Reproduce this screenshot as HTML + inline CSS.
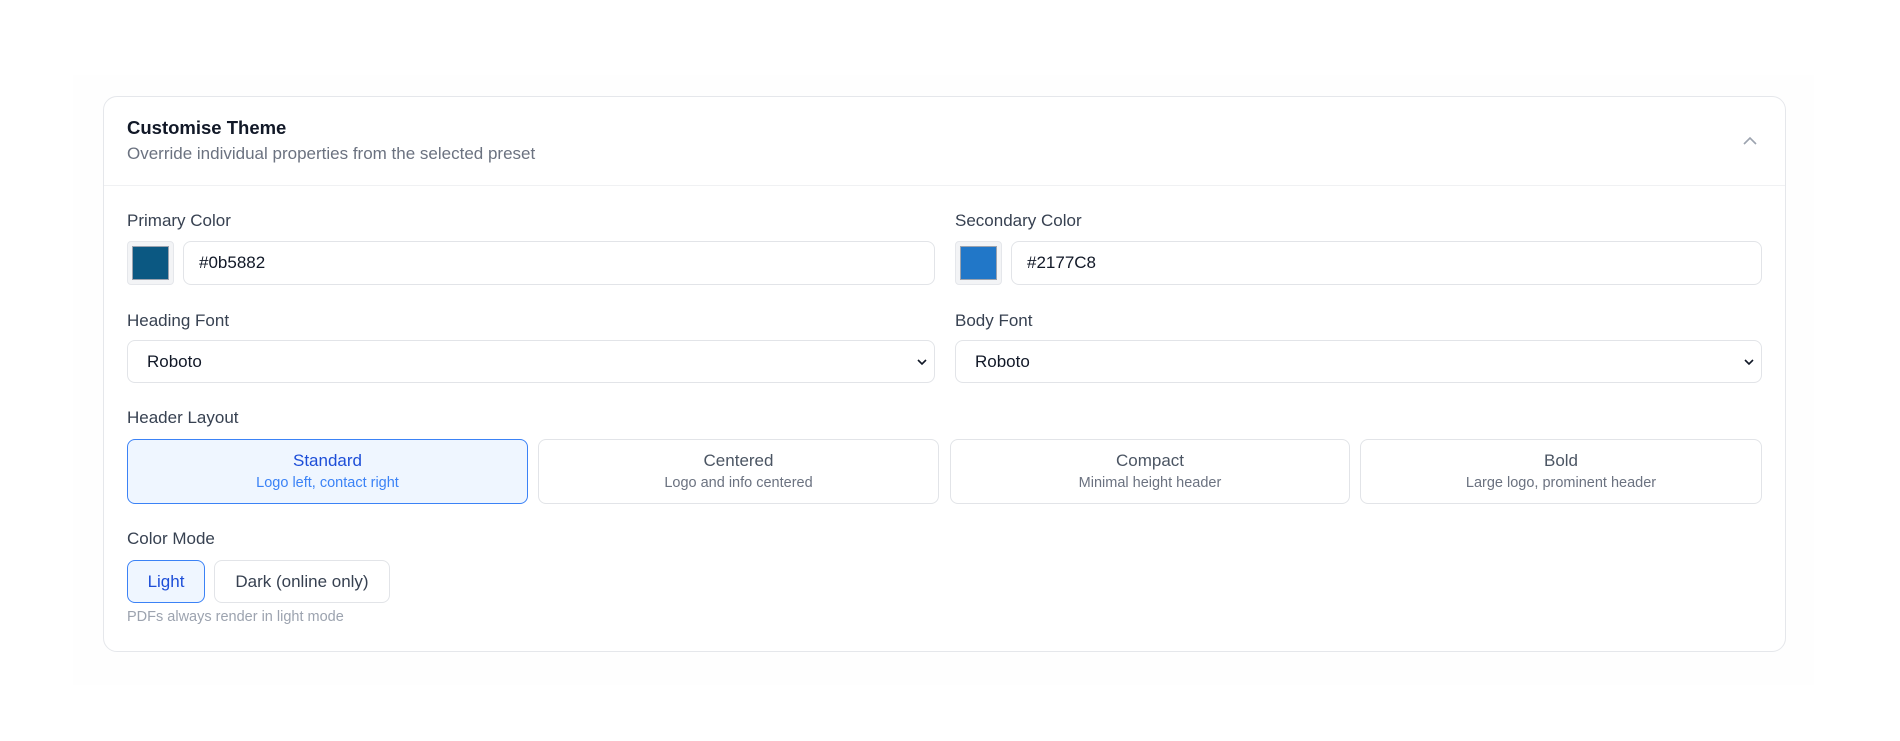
<!DOCTYPE html>
<html><head><meta charset="utf-8"><style>
*{box-sizing:border-box;margin:0;padding:0}
body{width:1900px;height:741px;background:#fff;font-family:"Liberation Sans",sans-serif;position:relative;overflow:hidden;color:#374151}
.abs{position:absolute}
.outer{left:73px;top:75px;width:1741px;height:610px;background:#fefefe}
.card{left:103px;top:96px;width:1683px;height:556px;border:1px solid #e5e7eb;border-radius:14px;background:#fff}
.lbl{font-size:17px;font-weight:500;color:#374151;line-height:20px}
.inp{border:1px solid #e2e4e8;border-radius:8px;background:#fff;font-size:17px;color:#111827;display:flex;align-items:center;padding-left:15px}
.sw{border:1px solid #e5e7eb;border-radius:4px;background:#f3f4f6;padding:4px}
.sw div{width:100%;height:100%;border:1px solid #9ca3af}
.btn{border:1px solid #e2e4e8;border-radius:8px;background:#fff;text-align:center}
.btn .t{font-size:17px;font-weight:500;color:#4b5563;margin-top:11px;line-height:20px}
.btn .s{font-size:14.5px;color:#6b7280;margin-top:3px;line-height:18px}
.btn.on{background:#eff6ff;border-color:#3b82f6}
.btn.on .t{color:#1d4ed8}.btn.on .s{color:#3b82f6}
.chev{position:absolute;right:6px;top:50%;margin-top:-6px}
</style></head><body>
<div class="abs outer"></div>
<div class="abs card"></div>
<div class="abs" style="left:127px;top:117px;font-size:18.5px;font-weight:600;color:#111827">Customise Theme</div>
<div class="abs" style="left:127px;top:144px;font-size:17px;color:#6b7280">Override individual properties from the selected preset</div>
<svg class="abs" style="left:1742px;top:135px" width="16" height="12" viewBox="0 0 16 12"><path d="M2 9 L8 3 L14 9" fill="none" stroke="#9ca3af" stroke-width="1.6"/></svg>
<div class="abs" style="left:104px;top:185px;width:1681px;height:1px;background:#f0f1f3"></div>

<div class="abs lbl" style="left:127px;top:211px">Primary Color</div>
<div class="abs sw" style="left:127px;top:241px;width:47px;height:44px"><div style="background:#0b5882"></div></div>
<div class="abs inp" style="left:183px;top:241px;width:752px;height:44px">#0b5882</div>
<div class="abs lbl" style="left:955px;top:211px">Secondary Color</div>
<div class="abs sw" style="left:955px;top:241px;width:47px;height:44px"><div style="background:#2177c8"></div></div>
<div class="abs inp" style="left:1011px;top:241px;width:751px;height:44px">#2177C8</div>

<div class="abs lbl" style="left:127px;top:311px">Heading Font</div>
<div class="abs inp" style="left:127px;top:340px;width:808px;height:43px;padding-left:19px">Roboto<svg class="chev" width="12" height="12" viewBox="0 0 12 12"><path d="M2 4 L6 8 L10 4" fill="none" stroke="#111827" stroke-width="1.6"/></svg></div>
<div class="abs lbl" style="left:955px;top:311px">Body Font</div>
<div class="abs inp" style="left:955px;top:340px;width:807px;height:43px;padding-left:19px">Roboto<svg class="chev" width="12" height="12" viewBox="0 0 12 12"><path d="M2 4 L6 8 L10 4" fill="none" stroke="#111827" stroke-width="1.6"/></svg></div>

<div class="abs lbl" style="left:127px;top:408px">Header Layout</div>
<div class="abs btn on" style="left:127px;top:439px;width:401px;height:65px"><div class="t">Standard</div><div class="s">Logo left, contact right</div></div>
<div class="abs btn" style="left:538px;top:439px;width:401px;height:65px"><div class="t">Centered</div><div class="s">Logo and info centered</div></div>
<div class="abs btn" style="left:950px;top:439px;width:400px;height:65px"><div class="t">Compact</div><div class="s">Minimal height header</div></div>
<div class="abs btn" style="left:1360px;top:439px;width:402px;height:65px"><div class="t">Bold</div><div class="s">Large logo, prominent header</div></div>

<div class="abs lbl" style="left:127px;top:529px">Color Mode</div>
<div class="abs btn on" style="left:127px;top:560px;width:78px;height:43px;line-height:41px;font-size:17px;color:#1d4ed8">Light</div>
<div class="abs btn" style="left:214px;top:560px;width:176px;height:43px;line-height:41px;font-size:17px;color:#374151">Dark (online only)</div>
<div class="abs" style="left:127px;top:609px;font-size:14.5px;color:#9ca3af">PDFs always render in light mode</div>
</body></html>
